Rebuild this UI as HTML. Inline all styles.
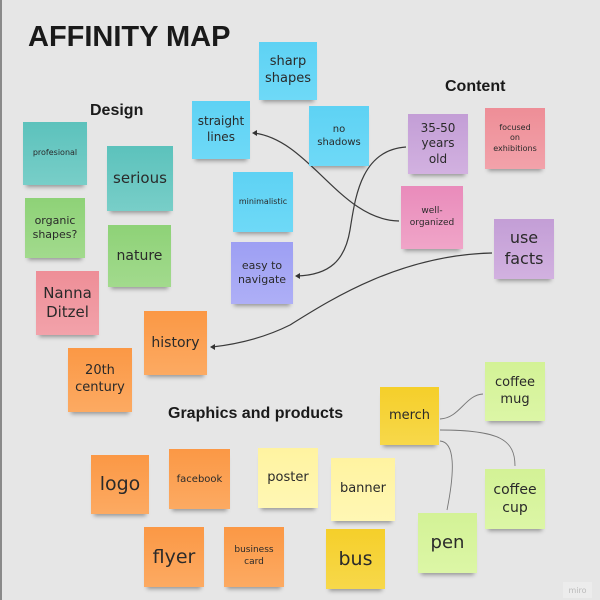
<!DOCTYPE html><html><head><meta charset="utf-8"><style>
body{margin:0;width:600px;height:600px;background:#e6e6e6;position:relative;overflow:hidden;font-family:"DejaVu Sans","Liberation Sans",sans-serif}
.bl{position:absolute;left:0;top:0;width:2px;height:600px;background:#8a8a8a}
.h{position:absolute;font-family:"Liberation Sans",sans-serif;font-weight:bold;color:#1a1a1a;white-space:nowrap}
.n{position:absolute;display:flex;align-items:center;justify-content:center;text-align:center;color:#2a2a2a;line-height:1.3;box-shadow:0 5px 4px -3px rgba(0,0,0,.35)}
.c{background:linear-gradient(#5ed2f4,#6ed9f7)}.t{background:linear-gradient(#5cc2bc,#78cec8)}.g{background:linear-gradient(#8ed277,#a2da8d)}
.p{background:linear-gradient(#ee8e97,#f2a2aa)}.v{background:linear-gradient(#9d9ff3,#aeaff6)}.pu{background:linear-gradient(#c39ed6,#d2b1e0)}
.pk{background:linear-gradient(#e98bbb,#f0a5c8)}.o{background:linear-gradient(#fb9845,#fcaa62)}.y{background:linear-gradient(#f5cf2a,#f7d84a)}
.lg{background:linear-gradient(#d3f296,#dcf6a6)}.ly{background:linear-gradient(#fff3a0,#fff7b4)}
</style></head><body><div class="bl"></div>
<svg width="600" height="600" style="position:absolute;left:0;top:0" fill="none">
<g stroke="#3a3a3a" stroke-width="1.2">
<path d="M399,221 C340,220 310,140 254,133"/>
<path d="M406,147 C360,150 355,200 350,230 C345,260 330,275 297,276"/>
<path d="M492,253 C400,255 330,300 290,325 C260,340 230,345 212,347"/>
</g>
<g stroke="#777" stroke-width="0.9">
<path d="M440,419 C460,418 465,395 483,394"/>
<path d="M440,430 C500,430 515,440 515,466"/>
<path d="M440,441 C455,442 455,470 447,510"/>
</g>
<g fill="#333"><path d="M252,133 l5,-3 v6z"/><path d="M295,276 l5,-3 v6z"/><path d="M210,347 l5,-3 v6z"/></g>
</svg>
<div class="h" style="left:28px;top:21px;font-size:29px">AFFINITY MAP</div>
<div class="h" style="left:90px;top:102px;font-size:16px">Design</div>
<div class="h" style="left:445px;top:78px;font-size:16px">Content</div>
<div class="h" style="left:168px;top:405px;font-size:16px">Graphics and products</div>
<div class="n c" style="left:259px;top:42px;width:58px;height:58px;font-size:13px">sharp<br>shapes</div>
<div class="n c" style="left:192px;top:101px;width:58px;height:58px;font-size:12px">straight<br>lines</div>
<div class="n c" style="left:309px;top:106px;width:60px;height:60px;font-size:10px">no<br>shadows</div>
<div class="n c" style="left:233px;top:172px;width:60px;height:60px;font-size:8px">minimalistic</div>
<div class="n v" style="left:231px;top:242px;width:62px;height:62px;font-size:11px">easy to<br>navigate</div>
<div class="n t" style="left:23px;top:122px;width:64px;height:63px;font-size:8px">profesional</div>
<div class="n t" style="left:107px;top:146px;width:66px;height:65px;font-size:15px">serious</div>
<div class="n g" style="left:25px;top:198px;width:60px;height:60px;font-size:11px">organic<br>shapes?</div>
<div class="n g" style="left:108px;top:225px;width:63px;height:62px;font-size:14px">nature</div>
<div class="n p" style="left:36px;top:271px;width:63px;height:64px;font-size:15px">Nanna<br>Ditzel</div>
<div class="n pu" style="left:408px;top:114px;width:60px;height:60px;font-size:12px">35-50<br>years<br>old</div>
<div class="n p" style="left:485px;top:108px;width:60px;height:61px;font-size:8px">focused<br>on<br>exhibitions</div>
<div class="n pk" style="left:401px;top:186px;width:62px;height:63px;font-size:9px">well-<br>organized</div>
<div class="n pu" style="left:494px;top:219px;width:60px;height:60px;font-size:16px">use<br>facts</div>
<div class="n o" style="left:144px;top:311px;width:63px;height:64px;font-size:14px">history</div>
<div class="n o" style="left:68px;top:348px;width:64px;height:64px;font-size:13px">20th<br>century</div>
<div class="n y" style="left:380px;top:387px;width:59px;height:58px;font-size:13px">merch</div>
<div class="n lg" style="left:485px;top:362px;width:60px;height:59px;font-size:13px">coffee<br>mug</div>
<div class="n lg" style="left:485px;top:469px;width:60px;height:60px;font-size:14px">coffee<br>cup</div>
<div class="n lg" style="left:418px;top:513px;width:59px;height:60px;font-size:18px">pen</div>
<div class="n o" style="left:91px;top:455px;width:58px;height:59px;font-size:19px">logo</div>
<div class="n o" style="left:169px;top:449px;width:61px;height:60px;font-size:10px">facebook</div>
<div class="n ly" style="left:258px;top:448px;width:60px;height:60px;font-size:13px">poster</div>
<div class="n ly" style="left:331px;top:458px;width:64px;height:63px;font-size:13px">banner</div>
<div class="n o" style="left:144px;top:527px;width:60px;height:60px;font-size:19px">flyer</div>
<div class="n o" style="left:224px;top:527px;width:60px;height:60px;font-size:9px">business<br>card</div>
<div class="n y" style="left:326px;top:529px;width:59px;height:60px;font-size:19px">bus</div>
<div style="position:absolute;left:563px;top:582px;width:29px;height:16px;background:#ececec;color:#bbb;font-size:8px;display:flex;align-items:center;justify-content:center">miro</div>
</body></html>
